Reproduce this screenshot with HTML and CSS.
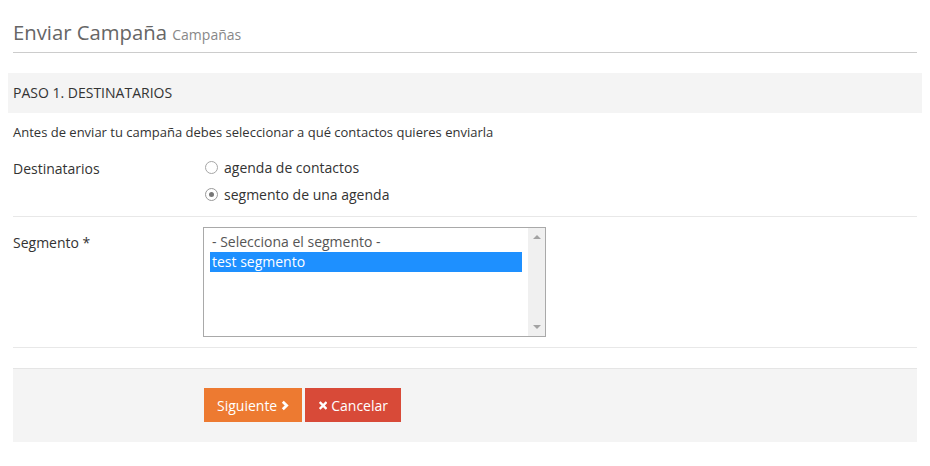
FILE: index.html
```html
<!DOCTYPE html>
<html lang="es">
<head>
<meta charset="utf-8">
<title>Enviar Campaña</title>
<link rel="stylesheet" href="styles.css">
</head>
<body>
  <div class="page-header">
    <h1 class="title">Enviar Campaña <small class="subtitle">Campañas</small></h1>
  </div>

  <div class="step-bar">PASO 1. DESTINATARIOS</div>

  <div class="content">
    <p class="intro">Antes de enviar tu campaña debes seleccionar a qué contactos quieres enviarla</p>

    <div class="form-row row-dest">
      <div class="label">Destinatarios</div>
      <div class="control">
        <label class="radio"><span class="radio-circle"></span>agenda de contactos</label>
        <label class="radio"><span class="radio-circle checked"></span>segmento de una agenda</label>
      </div>
    </div>

    <div class="form-row row-seg">
      <div class="label label-seg">Segmento *</div>
      <div class="control">
        <div class="listbox">
          <div class="options">
            <div class="option placeholder">- Selecciona el segmento -</div>
            <div class="option selected">test segmento</div>
          </div>
          <div class="scrollbar">
            <span class="arrow up"></span>
            <span class="arrow down"></span>
          </div>
        </div>
      </div>
    </div>

    <div class="actions">
      <button class="btn btn-next">Siguiente <svg class="ico" width="10" height="13" viewBox="0 0 10 13"><path d="M2.3 1.6 L7.3 6.5 L2.3 11.4" fill="none" stroke="#fff" stroke-width="3.6" stroke-linejoin="miter"/></svg></button>
      <button class="btn btn-cancel"><svg class="ico ico-x" width="11" height="11" viewBox="0 0 11 11"><path d="M2 2 L9 9 M9 2 L2 9" fill="none" stroke="#fff" stroke-width="3.2" stroke-linecap="square"/></svg> Cancelar</button>
    </div>
  </div>
</body>
</html>
```

FILE: styles.css
```css
html, body {
  background: #fff;
}
body {
  margin: 8px;
  font-family: "Open Sans", "Liberation Sans", sans-serif;
  font-size: 13px;
  color: #333;
}
.page-header {
  margin: 0 5px;
  padding-top: 9px;
  padding-bottom: 5px;
  border-bottom: 1px solid #ccc;
}
.title {
  margin: 0;
  font-size: 20.3px;
  font-weight: normal;
  line-height: 30px;
  height: 30px;
  color: #666;
}
.subtitle {
  font-size: 14px;
  line-height: 1;
  color: #888;
}
.step-bar {
  margin-top: 20px;
  height: 40px;
  line-height: 40px;
  padding: 0 5px;
  background: #f4f4f4;
  color: #333;
  font-size: 14px;
}
.content {
  margin: 0 5px;
}
.intro {
  margin: 9px 0 0;
  line-height: 20px;
}
.form-row {
  display: flex;
  border-bottom: 1px solid #e8e8e8;
}
.row-dest {
  padding: 12px 0 8px;
}
.row-seg {
  padding: 10px 0 10px;
}
.label {
  width: 190px;
  flex: none;
  line-height: 20px;
  padding-top: 5px;
  font-size: 14px;
}
.label-seg {
  padding-top: 6px;
}
.control {
  flex: 1;
}
.radio {
  display: flex;
  align-items: center;
  height: 27px;
  padding-left: 2px;
  font-size: 14px;
}
.radio-circle {
  width: 11px;
  height: 11px;
  border: 1px solid #a6a6a6;
  border-radius: 50%;
  margin-right: 6px;
  position: relative;
  background: #fff;
}
.radio-circle.checked {
  border-color: #999;
}
.radio-circle.checked::after {
  content: "";
  position: absolute;
  left: 3px;
  top: 3px;
  width: 5px;
  height: 5px;
  border-radius: 50%;
  background: #777;
}
.listbox {
  width: 341px;
  height: 108px;
  border: 1px solid #a9a9a9;
  display: flex;
  background: #fff;
}
.options {
  flex: 1;
  padding: 4px 6px 0 6px;
}
.option {
  height: 20px;
  line-height: 20px;
  padding-left: 2px;
  font-size: 14px;
  white-space: nowrap;
}
.option.placeholder {
  color: #555;
}
.option.selected {
  background: #1e90ff;
  color: #fff;
}
.scrollbar {
  width: 17px;
  flex: none;
  background: #f0f0f0;
  display: flex;
  flex-direction: column;
  justify-content: space-between;
  align-items: center;
  padding: 7px 0 7px;
}
.arrow {
  width: 0;
  height: 0;
  border-left: 4px solid transparent;
  border-right: 4px solid transparent;
}
.arrow.up {
  border-bottom: 4px solid #a3a3a3;
}
.arrow.down {
  border-top: 4px solid #a3a3a3;
}
.actions {
  margin-top: 20px;
  background: #f4f4f4;
  border-top: 1px solid #e5e5e5;
  padding: 19px 0 20px 191px;
  display: flex;
  gap: 3px;
}
.btn {
  height: 34px;
  border: none;
  border-radius: 0;
  font-family: "Open Sans", "Liberation Sans", sans-serif;
  font-size: 14px;
  color: #fff;
  padding: 0 13px;
  display: flex;
  align-items: center;
  cursor: pointer;
}
.btn-next {
  width: 98px;
  background: #ed7a31;
}
.btn-cancel {
  width: 96px;
  background: #d84a38;
}
.ico {
  margin-left: 4px;
}
.ico-x {
  margin-left: 1px;
  margin-right: 4px;
}
```
